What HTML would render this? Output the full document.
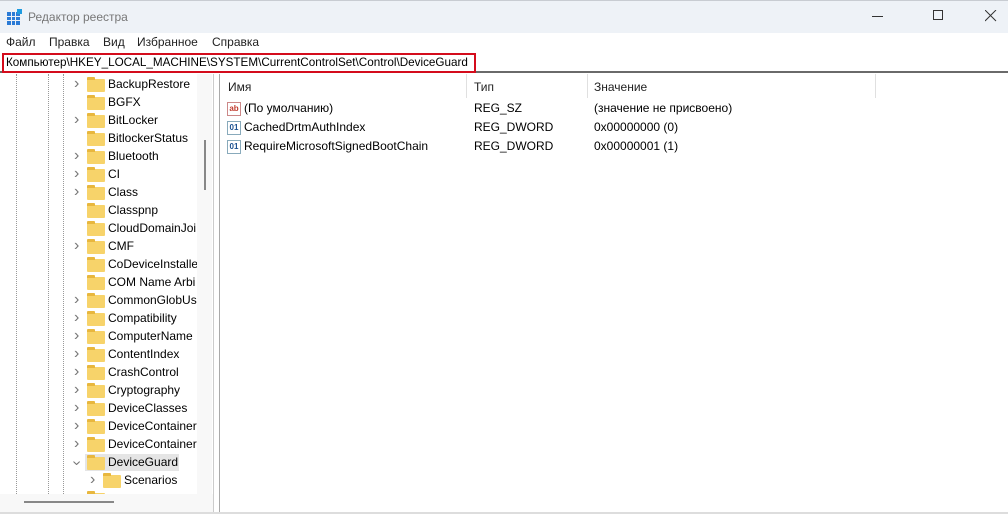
<!DOCTYPE html>
<html><head><meta charset="utf-8"><style>
*{margin:0;padding:0;box-sizing:border-box}
body{width:1008px;height:514px;overflow:hidden;background:#fff;font-family:"Segoe UI","Liberation Sans","DejaVu Sans",sans-serif;font-size:12px;color:#000;position:relative}
.abs{position:absolute}
.title{left:0;top:0;width:1008px;height:33px;background:#eef2f7;border-top:1px solid #c8ccd2}
.menu{top:35px;left:0;font-size:12px;color:#222}
.menu span{position:absolute;top:0;white-space:nowrap}
.addr{left:0;top:52px;width:1008px;height:21px;border-bottom:2px solid #6a6a6a;background:#fff}
.red{left:2px;top:53px;width:474px;height:20px;border:2px solid #d40c1c}
.tree{left:0;top:74px;width:197px;height:420px;background:#fff;overflow:hidden}
.vs{left:197px;top:74px;width:15px;height:420px;background:#f8f8f8}
.hs{left:0;top:494px;width:214px;height:18px;background:#f8f8f8}
.item{position:absolute;left:0;height:18px;width:200px}
.item .t{position:absolute;left:108px;top:2px;white-space:nowrap;font-size:12px}
.fold{position:absolute;left:87px;top:4px;width:18px;height:13px;background:#f7d36a;border-radius:1px}
.fold:before{content:"";position:absolute;left:0;top:-2px;width:8px;height:3px;background:#e8b73e;border-radius:1px 1px 0 0}
.chev{position:absolute;left:74px;top:0px;color:#777;font-size:16px}
.dot{position:absolute;border-left:1px dotted #999}
.right{left:219px;top:74px;width:789px;height:438px;border-left:1px solid #aaa;background:#fff}
.hdr{position:absolute;top:6px;font-size:12px;color:#222}
.sep{position:absolute;top:0;width:1px;height:24px;background:#e0e0e0}
.row{position:absolute;left:0;height:19px;width:789px;font-size:12px}
.row span{position:absolute;top:2px;white-space:nowrap}
.ic{position:absolute;left:7px;top:3px;width:14px;height:14px;border:1px solid #9aa;font-size:8px;line-height:12px;text-align:center;font-weight:bold}
</style></head><body>
<div class="abs title"></div>
<svg class="abs" style="left:7px;top:9px" width="16" height="16"><rect x="0" y="3" width="13" height="13" fill="#2b7bd6"/><g stroke="#eef2f7" stroke-width="1"><line x1="4.5" y1="3" x2="4.5" y2="16"/><line x1="8.5" y1="3" x2="8.5" y2="16"/><line x1="0" y1="7.5" x2="13" y2="7.5"/><line x1="0" y1="11.5" x2="13" y2="11.5"/></g><rect x="10" y="0" width="5" height="5" fill="#1e9be0"/></svg>
<div class="abs" style="left:28px;top:10px;color:#777;font-size:12px">Редактор реестра</div>
<div class="abs" style="left:872px;top:16px;width:11px;height:1px;background:#333"></div>
<div class="abs" style="left:933px;top:10px;width:10px;height:10px;border:1px solid #333"></div>
<svg class="abs" style="left:985px;top:10px" width="12" height="12"><path d="M0 0L11 11M11 0L0 11" stroke="#333" stroke-width="1"/></svg>
<div class="abs menu"><span style="left:6px">Файл</span><span style="left:49px">Правка</span><span style="left:103px">Вид</span><span style="left:137px">Избранное</span><span style="left:212px">Справка</span></div>
<div class="abs addr"></div>
<div class="abs red"></div>
<div class="abs" style="left:6px;top:56px;font-size:11.7px;white-space:nowrap">Компьютер\HKEY_LOCAL_MACHINE\SYSTEM\CurrentControlSet\Control\DeviceGuard</div>
<div class="abs tree">
<div class="dot" style="left:16px;top:0;height:420px"></div>
<div class="dot" style="left:48px;top:0;height:420px"></div>
<div class="dot" style="left:63px;top:0;height:420px"></div>
<div class="item" style="top:1px"><span class="chev">›</span><div class="fold"></div><span class="t">BackupRestore</span></div>
<div class="item" style="top:19px"><div class="fold"></div><span class="t">BGFX</span></div>
<div class="item" style="top:37px"><span class="chev">›</span><div class="fold"></div><span class="t">BitLocker</span></div>
<div class="item" style="top:55px"><div class="fold"></div><span class="t">BitlockerStatus</span></div>
<div class="item" style="top:73px"><span class="chev">›</span><div class="fold"></div><span class="t">Bluetooth</span></div>
<div class="item" style="top:91px"><span class="chev">›</span><div class="fold"></div><span class="t">CI</span></div>
<div class="item" style="top:109px"><span class="chev">›</span><div class="fold"></div><span class="t">Class</span></div>
<div class="item" style="top:127px"><div class="fold"></div><span class="t">Classpnp</span></div>
<div class="item" style="top:145px"><div class="fold"></div><span class="t">CloudDomainJoi</span></div>
<div class="item" style="top:163px"><span class="chev">›</span><div class="fold"></div><span class="t">CMF</span></div>
<div class="item" style="top:181px"><div class="fold"></div><span class="t">CoDeviceInstalle</span></div>
<div class="item" style="top:199px"><div class="fold"></div><span class="t">COM Name Arbi</span></div>
<div class="item" style="top:217px"><span class="chev">›</span><div class="fold"></div><span class="t">CommonGlobUs</span></div>
<div class="item" style="top:235px"><span class="chev">›</span><div class="fold"></div><span class="t">Compatibility</span></div>
<div class="item" style="top:253px"><span class="chev">›</span><div class="fold"></div><span class="t">ComputerName</span></div>
<div class="item" style="top:271px"><span class="chev">›</span><div class="fold"></div><span class="t">ContentIndex</span></div>
<div class="item" style="top:289px"><span class="chev">›</span><div class="fold"></div><span class="t">CrashControl</span></div>
<div class="item" style="top:307px"><span class="chev">›</span><div class="fold"></div><span class="t">Cryptography</span></div>
<div class="item" style="top:325px"><span class="chev">›</span><div class="fold"></div><span class="t">DeviceClasses</span></div>
<div class="item" style="top:343px"><span class="chev">›</span><div class="fold"></div><span class="t">DeviceContainer</span></div>
<div class="item" style="top:361px"><span class="chev">›</span><div class="fold"></div><span class="t">DeviceContainer</span></div>
<div class="abs" style="left:85px;top:380px;width:94px;height:17px;background:#e5e5e5"></div>
<div class="item" style="top:379px"><span class="chev" style="transform:rotate(90deg);left:74px;top:1px">›</span><div class="fold"></div><span class="t">DeviceGuard</span></div>
<div class="item" style="top:397px"><span class="chev" style="left:90px">›</span><div class="fold" style="left:103px"></div><span class="t" style="left:124px">Scenarios</span></div>
<div class="item" style="top:415px"><div class="fold"></div></div>
</div>
<div class="abs vs"></div>
<div class="abs" style="left:204px;top:140px;width:2px;height:50px;background:#888"></div>
<div class="abs hs"></div>
<div class="abs" style="left:24px;top:501px;width:90px;height:2px;background:#888"></div>
<div class="abs" style="left:213px;top:74px;width:1px;height:438px;background:#ccc"></div>
<div class="abs right">
<span class="hdr" style="left:8px">Имя</span>
<div class="sep" style="left:246px"></div>
<span class="hdr" style="left:254px">Тип</span>
<div class="sep" style="left:367px"></div>
<span class="hdr" style="left:374px">Значение</span>
<div class="sep" style="left:655px"></div>
<div class="row" style="top:25px"><div class="ic" style="color:#c0392b;border-color:#c88">ab</div><span style="left:24px">(По умолчанию)</span><span style="left:254px">REG_SZ</span><span style="left:374px">(значение не присвоено)</span></div>
<div class="row" style="top:44px"><div class="ic" style="color:#1a4f8f;border-color:#8ab">01</div><span style="left:24px">CachedDrtmAuthIndex</span><span style="left:254px">REG_DWORD</span><span style="left:374px">0x00000000 (0)</span></div>
<div class="row" style="top:63px"><div class="ic" style="color:#1a4f8f;border-color:#8ab">01</div><span style="left:24px">RequireMicrosoftSignedBootChain</span><span style="left:254px">REG_DWORD</span><span style="left:374px">0x00000001 (1)</span></div>
</div>
<div class="abs" style="left:0;top:512px;width:1008px;height:2px;background:#ddd"></div>
</body></html>
